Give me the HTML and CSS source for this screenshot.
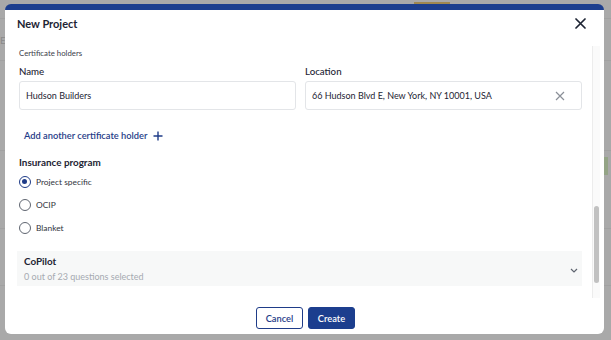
FILE: index.html
```html
<html>
    <head>
        <meta charset="UTF-8">
        <title>New Project</title>
        <link rel="stylesheet" href="styles.css">
    </head>
    <body>
        <div class="backdrop">
            <div class="bg-line" style="top: 18px"></div>
            <div class="bg-line" style="top: 60px"></div>
            <div class="bg-line" style="top: 150px"></div>
            <div class="bg-line" style="top: 228px"></div>
            <div class="bg-line" style="top: 285px"></div>
            <span class="bg-text">Er</span>
            <div class="bg-tab"></div>
            <div class="bg-green"></div>
        </div>

        <div class="modal">
            <div class="modal-header">
                <span class="modal-title">New Project</span>
                <svg class="close-icon" width="11" height="11" viewBox="0 0 11 11">
                    <path d="M1 1 L10 10 M10 1 L1 10" stroke="#1d2433" stroke-width="1.7" stroke-linecap="round"/>
                </svg>
            </div>

            <div class="modal-body">
                <div class="section-caption">Certificate holders</div>

                <div class="field-row">
                    <div class="field">
                        <label class="field-label">Name</label>
                        <div class="input-box">Hudson Builders</div>
                    </div>
                    <div class="field">
                        <label class="field-label">Location</label>
                        <div class="input-box">
                            <span>66 Hudson Blvd E, New York, NY 10001, USA</span>
                            <svg class="clear-icon" width="10" height="10" viewBox="0 0 10 10">
                                <path d="M1 1 L9 9 M9 1 L1 9" stroke="#8a8f98" stroke-width="1.2"/>
                            </svg>
                        </div>
                    </div>
                </div>

                <div class="add-link">
                    Add another certificate holder
                    <svg width="10" height="10" viewBox="0 0 10 10">
                        <path d="M5 0.5 V9.5 M0.5 5 H9.5" stroke="#1f3c88" stroke-width="1.4"/>
                    </svg>
                </div>

                <div class="group-title">Insurance program</div>
                <div class="radio-row"><span class="radio checked"></span>Project specific</div>
                <div class="radio-row"><span class="radio"></span>OCIP</div>
                <div class="radio-row"><span class="radio"></span>Blanket</div>

                <div class="copilot">
                    <div>
                        <div class="copilot-title">CoPilot</div>
                        <div class="copilot-sub">0 out of 23 questions selected</div>
                    </div>
                    <svg width="8" height="5" viewBox="0 0 8 5">
                        <path d="M1 1 L4 4 L7 1" stroke="#5f6570" stroke-width="1.2" fill="none"/>
                    </svg>
                </div>

                <div class="scroll-track"><div class="scroll-thumb"></div></div>
            </div>

            <div class="modal-footer">
                <button class="btn btn-outline">Cancel</button>
                <button class="btn btn-primary">Create</button>
            </div>
        </div>
    </body>
</html>
```
FILE: styles.css
```css
html, body
{
    margin: 0;
    padding: 0;
    width: 611px;
    height: 340px;
    overflow: hidden;
    font-family: "Lato", "Open Sans", sans-serif;
    background-color: #a9a9a9;
}

.backdrop
{
    position: absolute;
    left: 0;
    top: 0;
    width: 611px;
    height: 340px;
}

.bg-line
{
    position: absolute;
    left: 0;
    width: 611px;
    height: 1px;
    background-color: #a1a1a1;
}

.bg-text
{
    position: absolute;
    left: 0;
    top: 34px;
    font-size: 10px;
    color: #8a8a8a;
}

.bg-tab
{
    position: absolute;
    left: 414px;
    top: 2px;
    width: 36px;
    height: 3px;
    background-color: #a08850;
}

.bg-green
{
    position: absolute;
    left: 604px;
    top: 157px;
    width: 4px;
    height: 18px;
    background-color: #94a486;
}

.modal
{
    position: absolute;
    left: 5px;
    top: 4px;
    width: 599px;
    height: 330px;
    background-color: #ffffff;
    border-top: 6px solid #1c3e8e;
    border-radius: 6px;
    box-sizing: border-box;
    display: flex;
    flex-direction: column;
}

.modal-header
{
    height: 26px;
    padding: 0 18px 0 12px;
    display: flex;
    align-items: center;
    justify-content: space-between;
    flex-shrink: 0;
}

.modal-title
{
    font-size: 11px;
    font-weight: 700;
    color: #1d2433;
}

.modal-body
{
    position: relative;
    flex: 1;
    padding: 10px 22px 0 14px;
}

.section-caption
{
    font-size: 7.8px;
    line-height: 14px;
    color: #3b404a;
}

.field-row
{
    margin-top: 3px;
    display: flex;
    gap: 9px;
}

.field
{
    flex: 1;
    display: flex;
    flex-direction: column;
}

.field-label
{
    font-size: 9.7px;
    line-height: 16px;
    font-weight: 500;
    color: #1d2433;
}

.input-box
{
    margin-top: 2px;
    height: 29px;
    border: 1px solid #e3e5e8;
    border-radius: 3px;
    box-sizing: border-box;
    padding: 0 16px 0 6px;
    display: flex;
    align-items: center;
    justify-content: space-between;
    font-size: 9px;
    color: #1d2433;
}

.clear-icon
{
    margin-top: 1px;
}

.add-link
{
    margin-top: 18px;
    margin-left: 5px;
    display: flex;
    align-items: center;
    gap: 6px;
    font-size: 9.3px;
    line-height: 16px;
    font-weight: 600;
    color: #1f3c88;
}

.group-title
{
    margin-top: 10px;
    font-size: 9.9px;
    line-height: 16px;
    font-weight: 700;
    color: #1d2433;
}

.radio-row
{
    height: 23px;
    display: flex;
    align-items: center;
    gap: 5px;
    font-size: 8.4px;
    color: #2f343d;
}

.radio-row:first-of-type
{
    margin-top: 2px;
}

.radio
{
    width: 12px;
    height: 12px;
    border: 1px solid #5f6570;
    border-radius: 50%;
    box-sizing: border-box;
    position: relative;
}

.radio.checked
{
    border: 1.5px solid #1f3c88;
}

.radio.checked::after
{
    content: "";
    position: absolute;
    left: 2px;
    top: 2px;
    width: 5px;
    height: 5px;
    border-radius: 50%;
    background-color: #1f3c88;
}

.copilot
{
    margin-top: 12px;
    margin-left: -2px;
    height: 35px;
    padding: 0 4px 0 7px;
    background-color: #f7f8f8;
    display: flex;
    align-items: center;
    justify-content: space-between;
}

.copilot-title
{
    font-size: 9.9px;
    line-height: 16px;
    font-weight: 700;
    color: #1d2433;
}

.copilot-sub
{
    font-size: 9px;
    line-height: 16px;
    color: #a6aab1;
}

.copilot svg
{
    margin-top: 3px;
}

.scroll-track
{
    position: absolute;
    right: 4px;
    top: 10px;
    width: 7px;
    height: 252px;
    border-left: 1px solid #ececec;
    background-color: #fafafa;
}

.scroll-thumb
{
    margin-top: 160px;
    margin-left: 1px;
    width: 5px;
    height: 77px;
    border-radius: 3px;
    background-color: #c1c1c1;
}

.modal-footer
{
    height: 38px;
    box-sizing: border-box;
    padding-top: 11px;
    padding-left: 2px;
    flex-shrink: 0;
    display: flex;
    justify-content: center;
    align-items: flex-start;
    gap: 5px;
}

.btn
{
    height: 22px;
    width: 47px;
    border-radius: 3px;
    font-family: "Lato", sans-serif;
    font-size: 9.3px;
    font-weight: 600;
    box-sizing: border-box;
    padding: 0;
}

.btn-outline
{
    background-color: #ffffff;
    border: 1px solid #1f3c88;
    color: #1f3c88;
}

.btn-primary
{
    background-color: #1c3e8e;
    border: 1px solid #1c3e8e;
    color: #ffffff;
}
```
